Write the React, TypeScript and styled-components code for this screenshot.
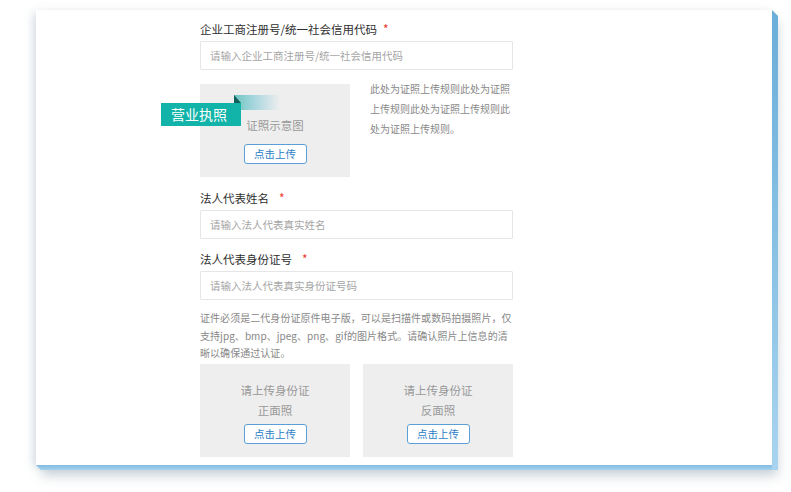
import React from 'react';
import styled, { createGlobalStyle } from 'styled-components';

const GlobalStyle = createGlobalStyle`
  html, body {
    margin: 0;
    padding: 0;
    background: #ffffff;
  }
  body {
    font-family: "Noto Sans CJK SC", "Noto Sans", "Liberation Sans", sans-serif;
    color: #333;
  }
  * {
    box-sizing: border-box;
  }
`;

const Page = styled.div`
  width: 791px;
  height: 492px;
  padding: 10px 0 0 36px;
  overflow: hidden;
`;

const Card = styled.div`
  position: relative;
  width: 736px;
  height: 455px;
  background: #fff;
  padding: 10px 0 0 164px;
  box-shadow: -3px 2px 9px rgba(90, 120, 150, 0.22), 6px 11px 11px rgba(90, 115, 140, 0.3);

  &::before {
    content: '';
    position: absolute;
    top: 0;
    right: -6px;
    width: 6px;
    height: 460px;
    background: linear-gradient(180deg, #6aaed9 0%, #8ec4e6 60%, #a9d4ef 100%);
    clip-path: polygon(0 0, 100% 6px, 100% 100%, 0 100%);
  }

  &::after {
    content: '';
    position: absolute;
    left: 0;
    bottom: -5px;
    width: 736px;
    height: 5px;
    background: linear-gradient(180deg, #80bbe0 0%, #a6d1ec 100%);
    clip-path: polygon(0 0, 100% 0, 100% 100%, 5px 100%);
  }
`;

const Form = styled.div`
  width: 313px;
  display: flex;
  flex-direction: column;
`;

const Label = styled.div<{ $gap?: number }>`
  font-size: 11.5px;
  line-height: 18px;
  color: #2e2e2e;
  margin-top: ${p => p.$gap ?? 0}px;
  display: flex;
  align-items: center;
`;

const Star = styled.span<{ $space: number }>`
  color: #f03a2e;
  margin-left: ${p => p.$space}px;
  font-size: 12px;
`;

const Input = styled.input`
  width: 313px;
  height: 29px;
  margin-top: 3px;
  border: 1px solid #e6e6e6;
  border-radius: 1px;
  padding: 0 9px;
  font-family: inherit;
  font-size: 10.5px;
  color: #333;
  outline: none;
  &::placeholder {
    color: #a5a5a5;
  }
`;

const UploadRow = styled.div`
  display: flex;
  margin-top: 14px;
`;

const UploadBox = styled.div<{ $pad: number }>`
  position: relative;
  width: 150px;
  height: 93px;
  background: #eeeeee;
  display: flex;
  flex-direction: column;
  align-items: center;
  padding-top: ${p => p.$pad}px;
`;

const BoxText = styled.div<{ $size: number }>`
  font-size: ${p => p.$size}px;
  line-height: 20px;
  color: #999;
  text-align: center;
`;

const UploadButton = styled.button<{ $gap: number }>`
  margin-top: ${p => p.$gap}px;
  width: 63px;
  height: 20px;
  padding: 0;
  background: #fff;
  border: 1px solid #5b9fd6;
  border-radius: 3px;
  color: #2b7dc6;
  font-family: inherit;
  font-size: 10.5px;
  line-height: 18px;
  cursor: pointer;
`;

const Fold = styled.div`
  position: absolute;
  left: 34px;
  top: 11px;
  width: 46px;
  height: 15px;
  background: linear-gradient(90deg, #6cc6c0 0%, #a9d6df 45%, rgba(238, 238, 238, 0) 100%);

  &::before {
    content: '';
    position: absolute;
    left: 0;
    top: 0;
    width: 7px;
    height: 8px;
    background: #0f5f5a;
    clip-path: polygon(0 0, 100% 100%, 0 100%);
  }
`;

const Ribbon = styled.div`
  position: absolute;
  left: -39px;
  top: 19px;
  width: 80px;
  height: 23px;
  background: #12b3a8;
  color: #fff;
  font-size: 14px;
  line-height: 23px;
  padding-left: 10px;
`;

const Rules = styled.div`
  width: 143px;
  margin-left: 20px;
  margin-top: -5px;
  font-size: 10px;
  line-height: 20px;
  color: #888;
`;

const Notes = styled.div`
  margin-top: 9px;
  font-size: 10px;
  line-height: 17.5px;
  color: #888;
  letter-spacing: 0.05px;
`;

const IdRow = styled.div`
  display: flex;
  gap: 13px;
  margin-top: 2px;
`;

const IdCard = ({ side }: { side: string }) => (
  <UploadBox $pad={16}>
    <BoxText $size={11.5}>请上传身份证</BoxText>
    <BoxText $size={11.5}>{side}</BoxText>
    <UploadButton $gap={4}>点击上传</UploadButton>
  </UploadBox>
);

export default function App() {
  return (
    <>
      <GlobalStyle />
      <Page>
        <Card>
          <Form>
            <Label>
              企业工商注册号/统一社会信用代码<Star $space={6}>*</Star>
            </Label>
            <Input placeholder="请输入企业工商注册号/统一社会信用代码" />

            <UploadRow>
              <UploadBox $pad={31}>
                <Fold />
                <Ribbon>营业执照</Ribbon>
                <BoxText $size={11.5}>证照示意图</BoxText>
                <UploadButton $gap={9}>点击上传</UploadButton>
              </UploadBox>
              <Rules>此处为证照上传规则此处为证照上传规则此处为证照上传规则此处为证照上传规则。</Rules>
            </UploadRow>

            <Label $gap={12}>
              法人代表姓名<Star $space={10}>*</Star>
            </Label>
            <Input placeholder="请输入法人代表真实姓名" />

            <Label $gap={11}>
              法人代表身份证号<Star $space={10}>*</Star>
            </Label>
            <Input placeholder="请输入法人代表真实身份证号码" />

            <Notes>
              证件必须是二代身份证原件电子版，可以是扫描件或数码拍摄照片，仅支持jpg、bmp、jpeg、png、gif的图片格式。请确认照片上信息的清晰以确保通过认证。
            </Notes>

            <IdRow>
              <IdCard side="正面照" />
              <IdCard side="反面照" />
            </IdRow>
          </Form>
        </Card>
      </Page>
    </>
  );
}
